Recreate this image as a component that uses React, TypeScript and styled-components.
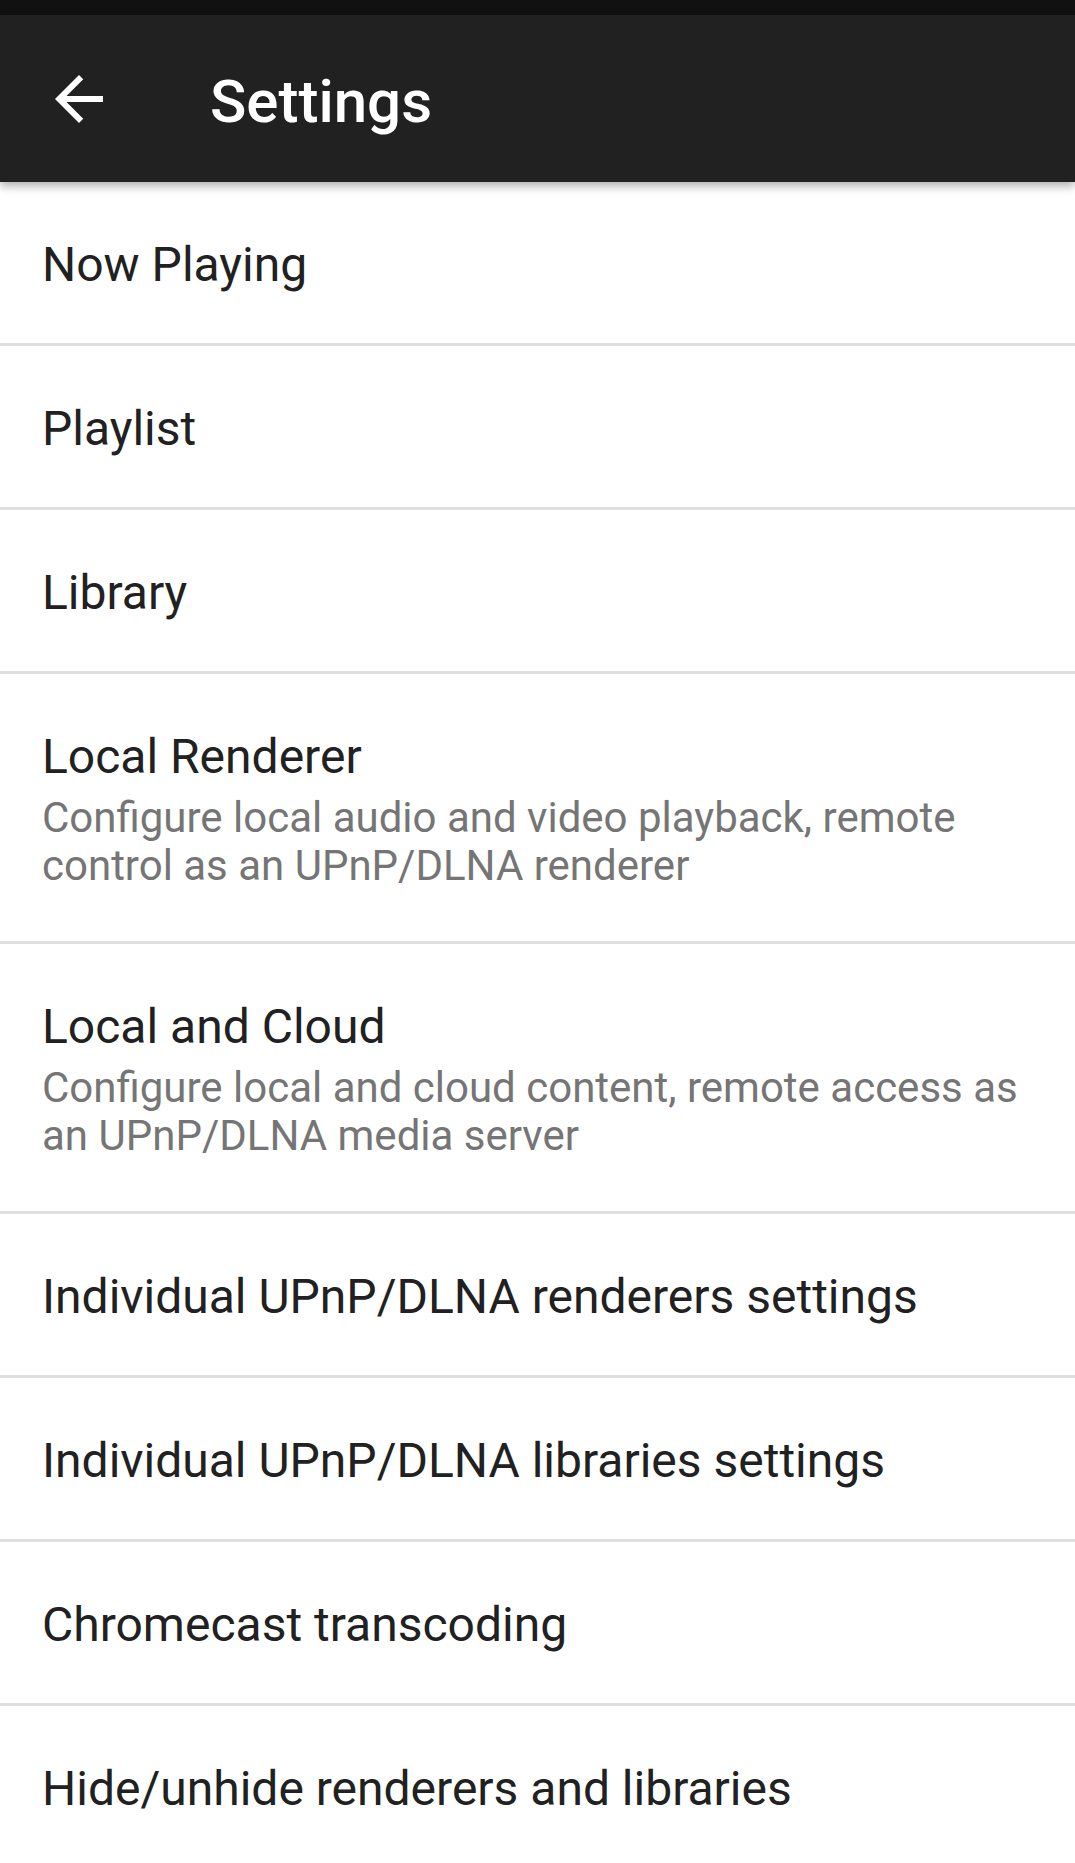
import React from "react";
import styled, { createGlobalStyle } from "styled-components";

const GlobalStyle = createGlobalStyle`
  html, body {
    margin: 0;
    padding: 0;
    background: #ffffff;
  }
  body {
    font-family: Roboto, "Noto Sans", "Liberation Sans", sans-serif;
    -webkit-font-smoothing: antialiased;
  }
`;

const Screen = styled.div`
  width: 1075px;
  height: 1863px;
  overflow: hidden;
  background: #ffffff;
  display: flex;
  flex-direction: column;
`;

const StatusBar = styled.div`
  height: 15px;
  background: #111111;
  flex: none;
`;

const Toolbar = styled.header`
  position: relative;
  z-index: 2;
  height: 167px;
  flex: none;
  background: #212121;
  display: flex;
  align-items: center;
  padding-left: 43px;
  gap: 95px;
  box-shadow: 0 4px 9px rgba(0, 0, 0, 0.32);
`;

const BackButton = styled.button`
  width: 72px;
  height: 72px;
  padding: 0;
  border: 0;
  background: transparent;
  display: flex;
  align-items: center;
  justify-content: center;
  cursor: pointer;
`;

const Title = styled.h1`
  margin: 7px 0 0;
  color: #ffffff;
  font-family: Roboto, "Noto Sans", sans-serif;
  font-weight: 500;
  font-size: 60px;
  line-height: 70px;
`;

const List = styled.ul`
  list-style: none;
  margin: 0;
  padding: 0;
  display: flex;
  flex-direction: column;
`;

const Item = styled.li<{ $last?: boolean }>`
  padding: 55px 48px 50px 42px;
  border-bottom: ${(p) => (p.$last ? "none" : "3px solid #dfdfdf")};
  display: flex;
  flex-direction: column;
`;

const ItemTitle = styled.div`
  font-family: Roboto, "Noto Sans", sans-serif;
  font-size: 48px;
  line-height: 56px;
  color: #212121;
`;

const ItemSummary = styled.div`
  margin: 9px 0 1px;
  font-family: Roboto, "Noto Sans", sans-serif;
  font-size: 42px;
  line-height: 48px;
  color: #757575;
`;

const ArrowBack = () => (
  <svg width="72" height="72" viewBox="0 0 24 24" aria-hidden="true">
    <path
      fill="#ffffff"
      d="M20 11H7.83l5.59-5.59L12 4l-8 8 8 8 1.41-1.41L7.83 13H20v-2z"
    />
  </svg>
);

const items: { title: string; summary?: string }[] = [
  { title: "Now Playing" },
  { title: "Playlist" },
  { title: "Library" },
  {
    title: "Local Renderer",
    summary:
      "Configure local audio and video playback, remote control as an UPnP/DLNA renderer",
  },
  {
    title: "Local and Cloud",
    summary:
      "Configure local and cloud content, remote access as an UPnP/DLNA media server",
  },
  { title: "Individual UPnP/DLNA renderers settings" },
  { title: "Individual UPnP/DLNA libraries settings" },
  { title: "Chromecast transcoding" },
  { title: "Hide/unhide renderers and libraries" },
];

export default function App() {
  return (
    <>
      <GlobalStyle />
      <Screen>
        <StatusBar />
        <Toolbar>
          <BackButton aria-label="Back">
            <ArrowBack />
          </BackButton>
          <Title>Settings</Title>
        </Toolbar>
        <List>
          {items.map((it, i) => (
            <Item key={it.title} $last={i === items.length - 1}>
              <ItemTitle>{it.title}</ItemTitle>
              {it.summary && <ItemSummary>{it.summary}</ItemSummary>}
            </Item>
          ))}
        </List>
      </Screen>
    </>
  );
}
